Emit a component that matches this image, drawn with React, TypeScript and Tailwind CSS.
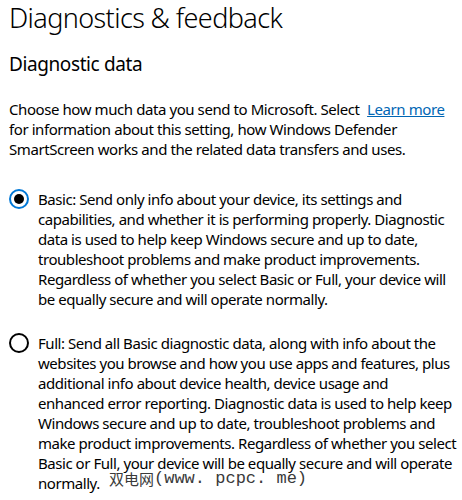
import React from "react";

const font = { fontFamily: '"Noto Sans", "Open Sans", sans-serif' };

function Radio({ checked }: { checked: boolean }) {
  return (
    <div className="shrink-0 w-5 h-5">
      <svg width="20" height="20" viewBox="0 0 20 20">
        <circle
          cx="10"
          cy="10"
          r="9"
          fill="white"
          stroke={checked ? "#0078d7" : "#000000"}
          strokeWidth="2"
        />
        {checked && <circle cx="10" cy="10" r="5" fill="#000000" />}
      </svg>
    </div>
  );
}

export default function App() {
  return (
    <div
      className="relative w-[462px] h-[500px] overflow-hidden bg-white text-black pl-[9px]"
      style={font}
    >
      <h1 className="text-[27px] leading-[36px] font-light tracking-[-0.6px] whitespace-nowrap">
        Diagnostics &amp; feedback
      </h1>
      <h2 className="mt-[14px] text-[19px] leading-[28px] font-normal tracking-[-0.4px]">
        Diagnostic data
      </h2>
      <p className="mt-[21px] text-[15px] leading-[20px] tracking-[-0.42px] whitespace-nowrap">
        Choose how much data you send to Microsoft. Select{" "}
        <a className="ml-[4px] text-[#0066b4] underline">Learn more</a>
        <br />
        for information about this setting, how Windows Defender
        <br />
        SmartScreen works and the related data transfers and uses.
      </p>

      <div className="mt-[30px] flex gap-[9px]">
        <Radio checked={true} />
        <p className="text-[15px] leading-[20px] tracking-[-0.45px] whitespace-nowrap">
          Basic: Send only info about your device, its settings and
          <br />
          capabilities, and whether it is performing properly. Diagnostic
          <br />
          data is used to help keep Windows secure and up to date,
          <br />
          troubleshoot problems and make product improvements.
          <br />
          Regardless of whether you select Basic or Full, your device will
          <br />
          be equally secure and will operate normally.
        </p>
      </div>

      <div className="mt-[24px] flex gap-[9px]">
        <Radio checked={false} />
        <p className="text-[15px] leading-[20px] tracking-[-0.45px] whitespace-nowrap">
          Full: Send all Basic diagnostic data, along with info about the
          <br />
          websites you browse and how you use apps and features, plus
          <br />
          additional info about device health, device usage and
          <br />
          enhanced error reporting. Diagnostic data is used to help keep
          <br />
          Windows secure and up to date, troubleshoot problems and
          <br />
          make product improvements. Regardless of whether you select
          <br />
          Basic or Full, your device will be equally secure and will operate
          <br />
          normally.
        </p>
      </div>

      <div
        className="absolute left-[109px] top-[467px] flex items-center text-[#3a3a3a] whitespace-nowrap"
        style={{ textShadow: "0 0 2px #fff, 0 0 2px #fff, 0 0 1px #fff" }}
      >
        <span
          className="text-[15px] leading-[24px]"
          style={{ fontFamily: '"Noto Sans CJK SC", sans-serif' }}
        >
          双电网
        </span>
        <span
          className="text-[17px] leading-[24px]"
          style={{ fontFamily: '"Liberation Mono", monospace' }}
        >
          (www. pcpc. me)
        </span>
      </div>
    </div>
  );
}
